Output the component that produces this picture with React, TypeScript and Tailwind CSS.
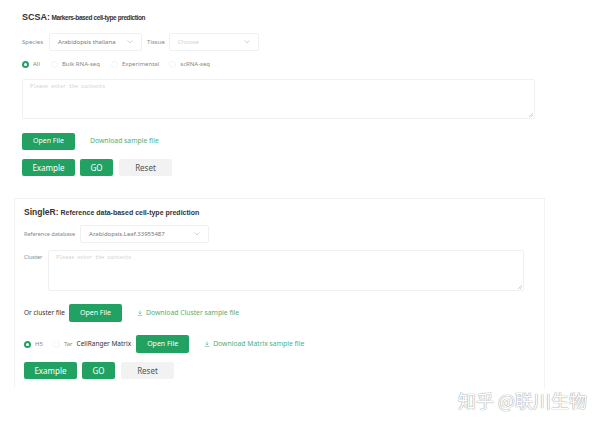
import React from "react";

const green = "bg-[#22a262]";

function Chevron() {
  return (
    <svg width="6" height="4" viewBox="0 0 6 4" className="text-[#c8c8c8]">
      <path d="M0.5 0.5 L3 3 L5.5 0.5" fill="none" stroke="currentColor" strokeWidth="0.8" />
    </svg>
  );
}

function Select({ value, placeholder, className }: { value?: string; placeholder?: string; className: string }) {
  return (
    <div
      className={`flex h-[18px] items-center justify-between rounded-[2px] border border-[#f0f0f0] bg-white pl-[8px] pr-[8px] text-[6px] ${className}`}
    >
      <span className={value ? "text-[#777]" : "text-[#d2d2d2]"}>{value ?? placeholder}</span>
      <Chevron />
    </div>
  );
}

function Radio({ checked, label, className = "" }: { checked?: boolean; label: string; className?: string }) {
  return (
    <div className={`flex items-center gap-[4px] ${className}`}>
      {checked ? (
        <span className="flex h-[7px] w-[7px] items-center justify-center rounded-full bg-[#22a262]">
          <span className="h-[3px] w-[3px] rounded-full bg-white" />
        </span>
      ) : (
        <span className="h-[7px] w-[7px] rounded-full border border-[#f3f3f3]" />
      )}
      <span className="text-[6px] text-[#888]">{label}</span>
    </div>
  );
}

function TextArea({ className }: { className: string }) {
  return (
    <div className={`relative rounded-[2px] border border-[#f0f0f0] bg-white ${className}`}>
      <span className="absolute left-[7px] top-[4px] font-['Liberation_Mono',monospace] text-[5px] text-[#d0d0d0]">
        Please enter the contents
      </span>
      <svg width="4" height="4" viewBox="0 0 4 4" className="absolute bottom-[1px] right-[1px]">
        <path d="M0 4 L4 0 M2 4 L4 2" stroke="#b0b0b0" strokeWidth="0.6" />
      </svg>
    </div>
  );
}

function GreenButton({ children, className }: { children: React.ReactNode; className: string }) {
  return (
    <div className={`flex items-center justify-center rounded-[2px] ${green} text-white ${className}`}>{children}</div>
  );
}

function Download({ icon, children, className = "" }: { icon?: boolean; children: React.ReactNode; className?: string }) {
  return (
    <span className={`flex items-center gap-[3px] text-[6.8px] text-[#4daf7a] ${className}`}>
      {icon ? (
        <svg width="6" height="6" viewBox="0 0 6 6">
          <path d="M3 0.5 V3.8 M1.6 2.6 L3 3.9 L4.4 2.6 M0.8 5.4 H5.2" stroke="#4daf7a" strokeWidth="0.6" fill="none" />
        </svg>
      ) : null}
      {children}
    </span>
  );
}

function ActionRow({ className }: { className: string }) {
  return (
    <div className={`flex items-center ${className}`}>
      <GreenButton className="h-[17px] w-[53px] text-[8px]">Example</GreenButton>
      <GreenButton className="ml-[5px] h-[17px] w-[33px] text-[8px]">GO</GreenButton>
      <div className="ml-[6px] flex h-[17px] w-[53px] items-center justify-center rounded-[2px] bg-[#f2f2f2] text-[8px] text-[#555]">
        Reset
      </div>
    </div>
  );
}

const titleFont = "font-['Liberation_Sans',sans-serif]";

export default function App() {
  return (
    <div className="relative h-[422px] w-[602px] overflow-hidden bg-white font-['Noto_Sans','Liberation_Sans',sans-serif]">
      {/* SCSA */}
      <section className="ml-[22px] w-[520px] pt-[12px]">
        <h3 className={`${titleFont} text-[6.5px] font-bold leading-[10px] tracking-[-0.4px] text-[#333]`}>
          <span className="text-[9px] tracking-normal">SCSA:</span> Markers-based cell-type prediction
        </h3>
        <div className="mt-[10px] flex items-center">
          <span className="text-[6px] text-[#888]">Species</span>
          <Select value="Arabidopsis thaliana" className="ml-[6px] w-[93px]" />
          <span className="ml-[5px] text-[6px] text-[#888]">Tissue</span>
          <Select placeholder="Choose" className="ml-[4px] w-[90px]" />
        </div>
        <div className="mt-[9px] flex items-center">
          <Radio checked label="All" />
          <Radio label="Bulk RNA-seq" className="ml-[11px]" />
          <Radio label="Experimental" className="ml-[11px]" />
          <Radio label="scRNA-seq" className="ml-[10px]" />
        </div>
        <TextArea className="mt-[10px] h-[40px] w-[513px]" />
        <div className="mt-[14px] flex items-center">
          <GreenButton className="h-[17px] w-[53px] text-[7px]">Open File</GreenButton>
          <Download className="ml-[15px]">Download sample file</Download>
        </div>
        <ActionRow className="mt-[9px]" />
      </section>

      {/* SingleR */}
      <section className="ml-[14px] mt-[22px] h-[190px] w-[531px] border-x border-t border-[#f3f3f3] pl-[9px] pt-[8px]">
        <h3 className={`${titleFont} text-[7px] font-bold leading-[10px] text-[#333]`}>
          <span className="text-[8.5px]">SingleR:</span> Reference data-based cell-type prediction
        </h3>
        <div className="mt-[7px] flex items-center">
          <span className="text-[5.5px] text-[#888]">Reference database</span>
          <Select value="Arabidopsis.Leaf.33955487" className="ml-[5px] w-[129px]" />
        </div>
        <div className="mt-[7px] flex items-start">
          <span className="mt-[3px] text-[5.5px] text-[#888]">Cluster</span>
          <TextArea className="ml-[6px] h-[41px] w-[476px]" />
        </div>
        <div className="mt-[13px] flex items-center">
          <span className="text-[6.5px] text-[#333]">Or cluster file</span>
          <GreenButton className="ml-[4px] h-[18px] w-[53px] text-[7px]">Open File</GreenButton>
          <Download icon className="ml-[15px]">Download Cluster sample file</Download>
        </div>
        <div className="mt-[13px] flex items-center">
          <Radio checked label="H5" />
          <Radio label="Tar" className="ml-[10px]" />
          <span className="ml-[4px] text-[6.5px] text-[#333]">CellRanger Matrix</span>
          <GreenButton className="ml-[5px] h-[18px] w-[53px] text-[7px]">Open File</GreenButton>
          <Download icon className="ml-[15px]">Download Matrix sample file</Download>
        </div>
        <ActionRow className="mt-[9px]" />
      </section>

      <div className="absolute left-[458px] top-[389px] font-['Noto_Sans_CJK_SC',sans-serif] text-[18px] leading-[22px] text-white [text-shadow:0_0_1px_#9a9a9a,0_0_1px_#9a9a9a]">
        知乎 @联川生物
      </div>
    </div>
  );
}
